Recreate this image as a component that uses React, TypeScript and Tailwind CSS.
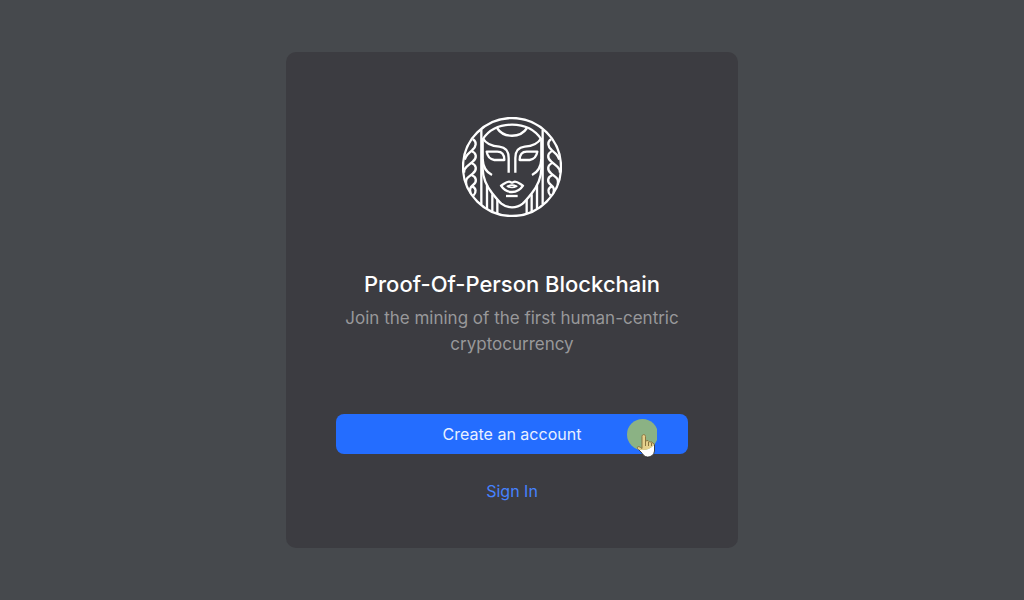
function FaceHalf() {
  return (
    <>
      <path d="M74 53V277" />
      <path d="M78 82C96 55 128 38 166 38" />
      <path d="M78 78C90 99 108 103 128 104C148 106 156 120 156 138V182" />
      <path d="M90 119H122C138 119 143 129 143 144H113C99 142 92 132 90 119Z" />
      <path d="M78 80V142C79 162 86 179 106 189" />
      <path d="M78 142V172C79 205 92 225 106 243C118 258 126 268 134 275C145 284 155 286 166 286" />
      <path d="M91 220V290M107 247V299M122 264V305" />
      <path d="M49 82C61 90 59 104 47 114L33 127C28 132 26 137 24 143" />
      <path d="M44 117C60 122 62 138 48 149L31 163C25 168 22 174 22 182" />
      <path d="M44 153C60 158 62 174 48 185L34 196C28 201 27 209 29 218" />
      <path d="M44 189C60 194 62 210 49 219C39 226 38 233 42 243" />
      <path d="M46 223C59 228 60 241 50 251" />
    </>
  )
}

function Logo() {
  return (
    <svg
      viewBox="16 15 300 300"
      className="h-[100px] w-[100px]"
      fill="none"
      stroke="white"
      strokeWidth="7"
      strokeLinejoin="round"
      role="img"
      aria-label="Face in a circle"
    >
      <circle cx="166" cy="165" r="147" />
      <FaceHalf />
      <g transform="translate(332 0) scale(-1 1)">
        <FaceHalf />
      </g>
      <path d="M121 48C141 79 191 79 211 48" />
      <path d="M133 221C142 216 149 209 157 209C162 209 163 212 166 212C169 212 170 209 175 209C183 209 190 216 199 221C190 235 178 240 166 240C154 240 142 235 133 221Z" />
      <path d="M152 223C160 219 172 219 180 223C172 227 160 227 152 223Z" strokeWidth="5" />
      <path d="M148 252H183" />
    </svg>
  )
}

const hand =
  'M17 18.5C17 16 20.5 16 20.5 18.5V23L23 22.5L24.5 24L27 24L28 25.5L29.5 26V33C29 37 26 39 22.5 39C19 39 18 36 16 34L12.5 30.5C12 28 14 28 17 30.5Z'

function Pointer() {
  return (
    <svg
      viewBox="0 0 32 40"
      className="pointer-events-none absolute top-1 right-[31px] h-10 w-8"
      aria-hidden="true"
    >
      <defs>
        <clipPath id="spot">
          <circle cx="17.5" cy="16.5" r="15.5" />
        </clipPath>
      </defs>
      <path d={hand} fill="white" stroke="#222" strokeWidth="0.8" />
      <circle cx="17.5" cy="16.5" r="15.5" fill="#8bb284" />
      <g clipPath="url(#spot)">
        <path d={hand} fill="#e5d08c" stroke="#8a7540" />
        <path d="M20.5 23V28M23.5 24V28M26.5 25V28" stroke="#8a7540" />
      </g>
    </svg>
  )
}

export default function App() {
  return (
    <main className="flex min-h-screen items-center justify-center bg-[#46494d] font-['Inter',sans-serif]">
      <section className="flex w-full max-w-[452px] flex-col items-center rounded-[10px] bg-[#3c3c41] px-[50px] pt-[65px] pb-[37px]">
        <Logo />
        <h1 className="mt-[50px] text-center text-[22px] leading-[34px] font-medium text-white">
          Proof-Of-Person Blockchain
        </h1>
        <p className="mt-1 text-center text-[17px] leading-[26px] text-[#98989a]">
          Join the mining of the first human-centric cryptocurrency
        </p>
        <div className="relative mt-[57px] w-full">
          <button
            type="button"
            className="h-10 w-full cursor-pointer rounded-lg bg-[#246dff] text-base text-[#e9f0ff]"
          >
            Create an account
          </button>
          <Pointer />
        </div>
        <a href="#sign-in" className="mt-[17px] px-4 py-2 text-base text-[#4682ff]">
          Sign In
        </a>
      </section>
    </main>
  )
}
